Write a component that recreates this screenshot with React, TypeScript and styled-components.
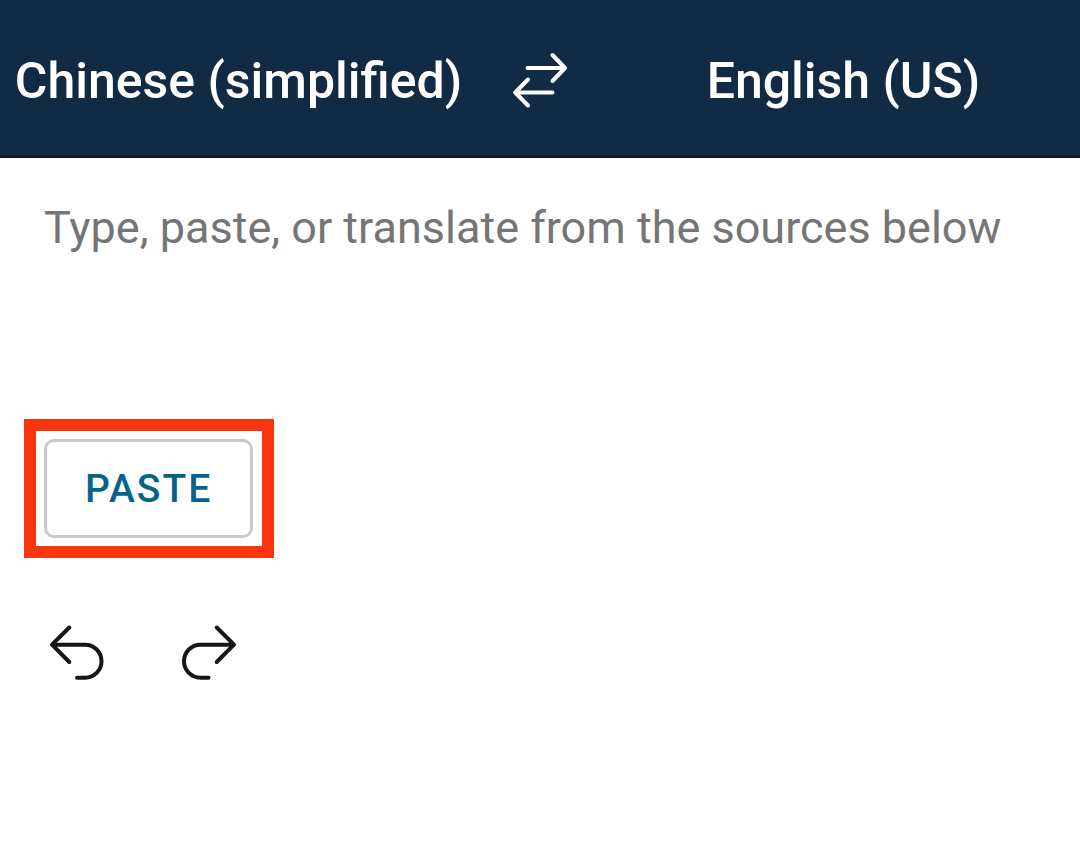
import React from "react";
import styled, { createGlobalStyle } from "styled-components";

const GlobalStyle = createGlobalStyle`
  *, *::before, *::after { box-sizing: border-box; }
  body {
    margin: 0;
    background: #ffffff;
    font-family: Roboto, "Liberation Sans", sans-serif;
  }
`;

const Page = styled.div`
  display: flex;
  flex-direction: column;
  min-height: 100vh;
`;

const LanguageBar = styled.header`
  display: grid;
  grid-template-columns: minmax(0, 1fr) 132px minmax(0, 1fr);
  align-items: center;
  padding: 49px 0 43px 2px;
  background: #112b45;
  border-bottom: 2px solid #0a1c33;
`;

const PlainButton = styled.button`
  display: flex;
  align-items: center;
  justify-content: center;
  padding: 0;
  border: 0;
  background: none;
  color: inherit;
  font: inherit;
  cursor: pointer;
`;

const LanguageButton = styled(PlainButton)`
  color: #ffffff;
  font-size: 50px;
  font-weight: 500;
  line-height: 64px;
  white-space: nowrap;
`;

const SwapButton = styled(PlainButton)`
  color: #ffffff;
`;

const Main = styled.main`
  display: flex;
  flex-direction: column;
  align-items: flex-start;
  padding: 40px 24px;
`;

const SourceText = styled.textarea`
  display: block;
  width: 100%;
  height: 221px;
  padding: 0 20px;
  border: 0;
  outline: 0;
  resize: none;
  overflow: hidden;
  background: transparent;
  color: #222222;
  font-family: inherit;
  font-size: 45px;
  line-height: 60px;

  &::placeholder {
    color: #757575;
    opacity: 1;
  }
`;

const Highlight = styled.div`
  padding: 8px 9px 8px 8px;
  border: 12px solid #f93510;
`;

const PasteButton = styled(PlainButton)`
  padding: 23px 38px 21px;
  border: 3px solid #c8cbce;
  border-radius: 10px;
  color: #07638c;
  font-size: 39px;
  font-weight: 500;
  line-height: 49px;
  letter-spacing: 2px;
`;

const HistoryControls = styled.div`
  display: flex;
  gap: 72px;
  padding: 62px 23px;
`;

const HistoryButton = styled(PlainButton)`
  color: #15151a;
`;

const Icon = styled.svg`
  display: block;
  fill: none;
  stroke: currentColor;
  stroke-width: 4;
  stroke-linecap: round;
  stroke-linejoin: round;
`;

const SwapIcon = () => (
  <Icon width="60" height="60" viewBox="0 0 60 60" aria-hidden="true">
    <path d="M16.5 17H54M41.5 4L54 17L41.5 30" />
    <path d="M41.5 41.5H4.2M17 28.5L4.2 41.5L17 54.5" />
  </Icon>
);

const UndoIcon = () => (
  <Icon width="60" height="60" viewBox="0 0 60 60" aria-hidden="true">
    <path d="M22.3 7.5L5 24.7L22.3 42M5 24.7H38A16.5 16.5 0 0 1 38 57.7H30" />
  </Icon>
);

const RedoIcon = () => (
  <Icon width="60" height="60" viewBox="0 0 60 60" aria-hidden="true">
    <path d="M37.7 7.5L55 24.7L37.7 42M55 24.7H21.5A16.5 16.5 0 0 0 21.5 57.7H29.5" />
  </Icon>
);

export default function App() {
  return (
    <Page>
      <GlobalStyle />
      <LanguageBar>
        <LanguageButton type="button">Chinese (simplified)</LanguageButton>
        <SwapButton type="button" aria-label="Swap languages">
          <SwapIcon />
        </SwapButton>
        <LanguageButton type="button">English (US)</LanguageButton>
      </LanguageBar>
      <Main>
        <SourceText
          aria-label="Text to translate"
          placeholder="Type, paste, or translate from the sources below"
        />
        <Highlight>
          <PasteButton type="button">PASTE</PasteButton>
        </Highlight>
        <HistoryControls>
          <HistoryButton type="button" aria-label="Undo">
            <UndoIcon />
          </HistoryButton>
          <HistoryButton type="button" aria-label="Redo">
            <RedoIcon />
          </HistoryButton>
        </HistoryControls>
      </Main>
    </Page>
  );
}
